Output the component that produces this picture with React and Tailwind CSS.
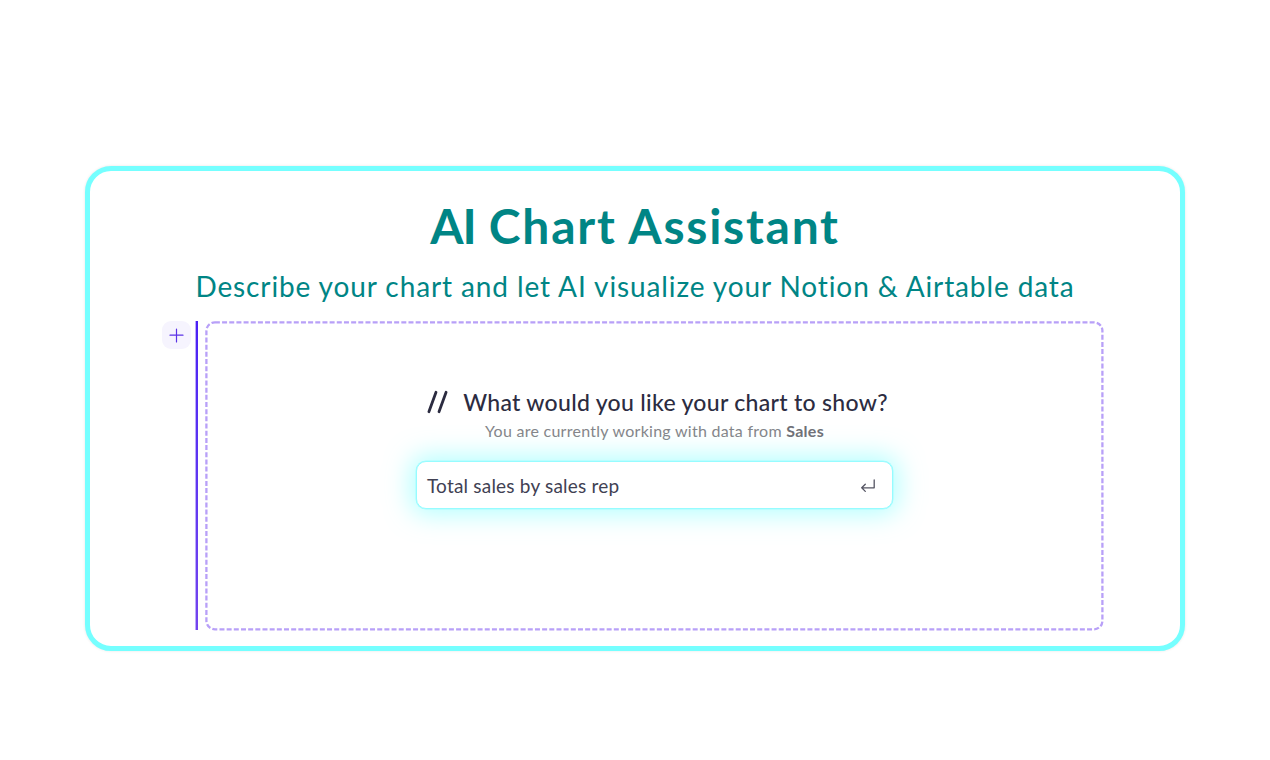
import React from "react";

const DashedFrame = () => (
  <svg className="absolute inset-0 w-full h-full pointer-events-none" viewBox="0 0 899 310" fill="none">
    <rect x="1.4" y="1.3" width="896" height="307" rx="8.5" stroke="#b8a0f8" strokeWidth="2.3" strokeDasharray="5 2.17" />
  </svg>
);

const AddButton = () => (
  <button className="w-[29px] h-[28px] rounded-[9px] bg-[#f6f4fe] flex items-center justify-center" aria-label="Add">
    <svg width="15" height="15" viewBox="0 0 15 15" fill="none" stroke="#5b32e6" strokeWidth="1.2" strokeLinecap="round">
      <path d="M7.5 1v13M1 7.2h13" />
    </svg>
  </button>
);

const PromptInput = ({ value }) => (
  <div className="w-[477px] h-[48px] rounded-[10px] border-[1.5px] border-[#96fcff] bg-white flex items-center justify-between pt-[2px] pl-[10px] pr-[16px] shadow-[0_0_0_0.5px_#a6fdff,0_0_26px_5px_rgba(110,255,255,0.52)]">
    <span className="text-[19px] leading-6 text-[#414153] whitespace-nowrap tracking-[0.2px]">{value}</span>
    <svg width="16" height="14" viewBox="0 0 16 14" fill="none" stroke="#555563" strokeWidth="1.3" strokeLinecap="round" strokeLinejoin="round">
      <path d="M14.2 1v7.8H1.7M5.3 5.2L1.7 8.8l3.6 3.6" />
    </svg>
  </div>
);

export default function App() {
  return (
    <div className="w-[1270px] h-[760px] bg-white overflow-hidden pt-[166px] pl-[85px] font-['Lato',sans-serif]">
      <section className="w-[1100px] h-[485px] rounded-[26px] border-5 border-[#75ffff] bg-white shadow-[0_0_3px_rgba(0,0,0,0.1)]">
        <div className="flex flex-col items-center text-[#008585] whitespace-nowrap">
          <h1 className="h-[60px] mt-[25px] text-[48px] leading-[60px] font-bold tracking-[1.75px]">
            <span className="tracking-[-1.2px]">AI</span> Chart Assistant
          </h1>
          <p className="h-[36px] mt-[12px] text-[28px] leading-[36px] tracking-[0.89px]">
            Describe your chart and let AI visualize your Notion &amp; Airtable data
          </p>
        </div>
        <div className="flex mt-[17px] pl-[72px]">
          <AddButton />
          <div className="w-[3px] h-[309px] ml-[4px] border-l border-[#bcabfa] bg-linear-to-b from-[#4a20f5] to-[#7444ee]" />
          <div className="relative w-[899px] h-[310px] ml-[7px] pt-[65px] flex flex-col items-center whitespace-nowrap">
            <DashedFrame />
            <div className="flex items-center h-[32px] gap-[15px] pl-[6px]">
              <svg width="21" height="24" viewBox="0 0 21 24" fill="none" stroke="#2b2b40" strokeWidth="2.8" strokeLinecap="round">
                <path d="M1.9 21.8L9 2.2M12 21.8L19.1 2.2" />
              </svg>
              <h2 className="text-[23px] leading-8 font-medium text-[#2c2c41] tracking-[0.3px]">What would you like your chart to show?</h2>
            </div>
            <p className="mt-[1px] text-[16px] leading-6 text-[#858589] tracking-[0.27px]">
              You are currently working with data from <b className="text-[#707077]">Sales</b>
            </p>
            <div className="mt-[18px]">
              <PromptInput value="Total sales by sales rep" />
            </div>
          </div>
        </div>
      </section>
    </div>
  );
}
